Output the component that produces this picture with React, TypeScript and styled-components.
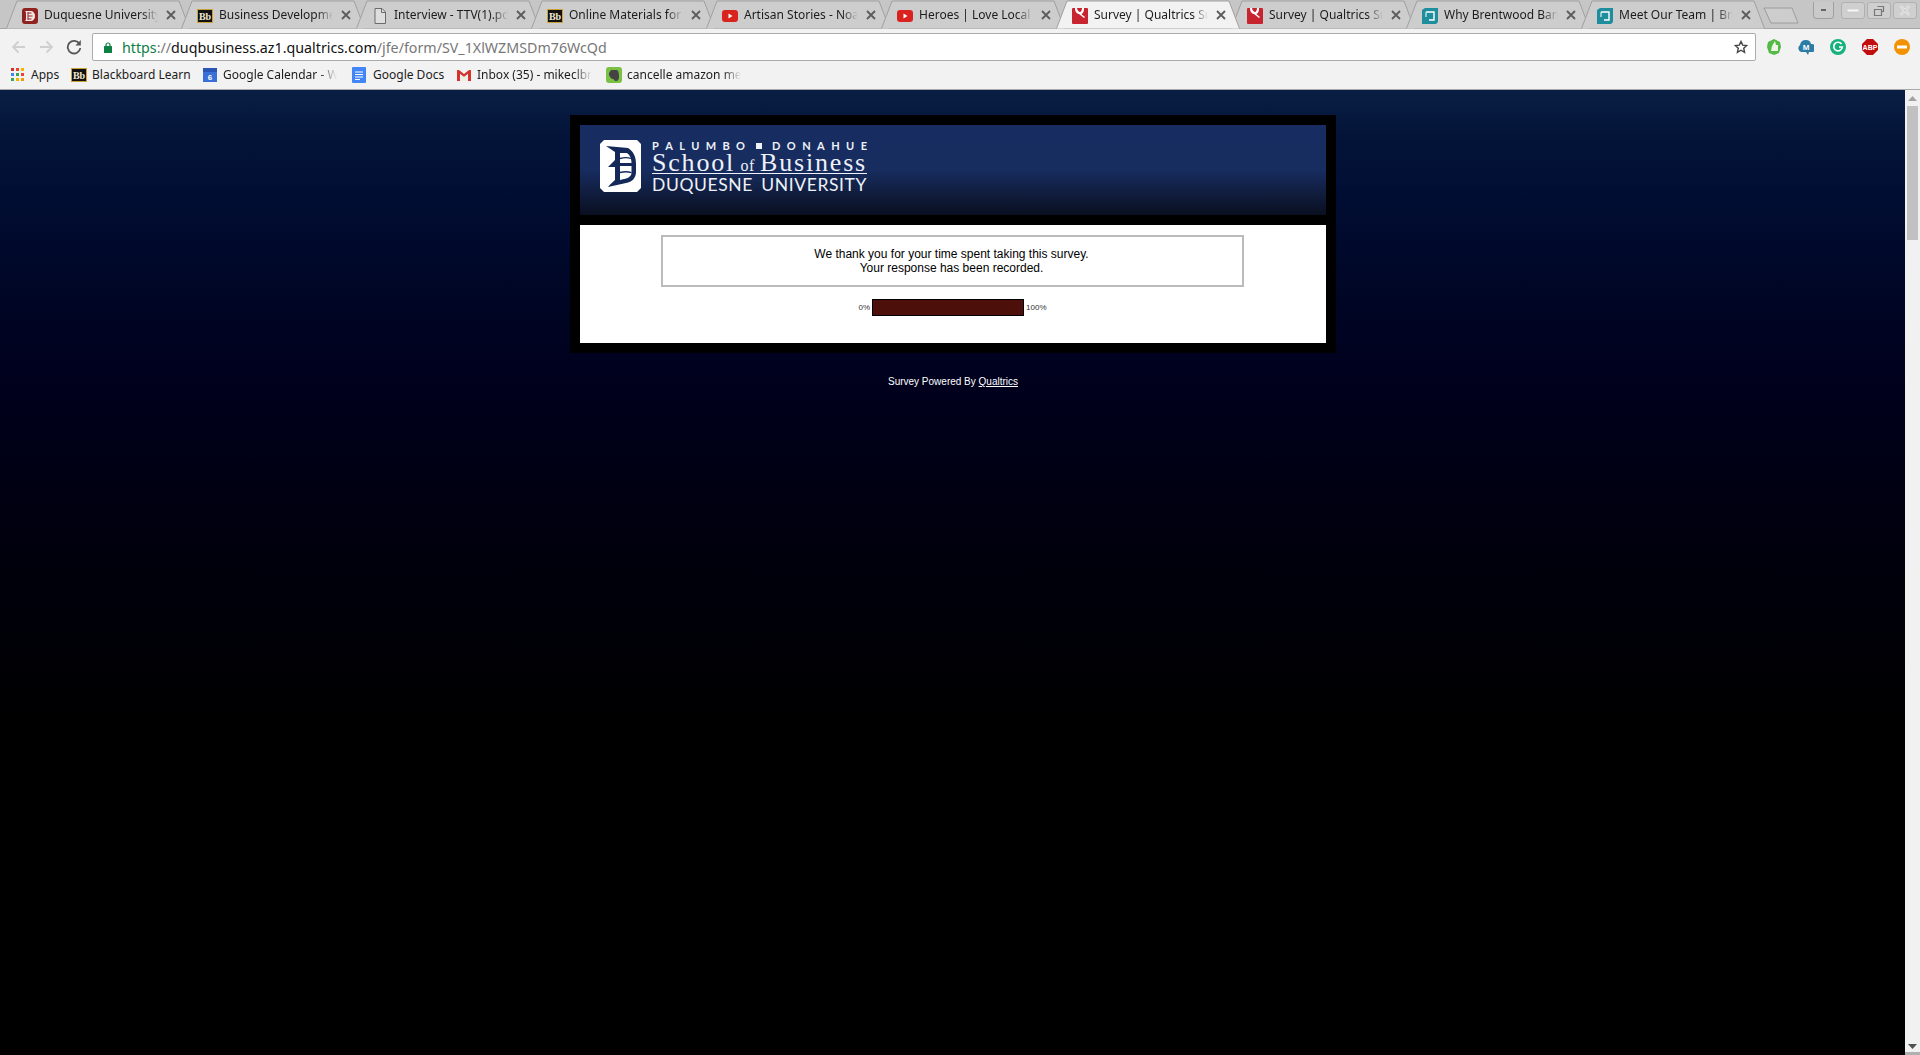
import React from "react";
import styled, { createGlobalStyle } from "styled-components";

const Global = createGlobalStyle`
  html, body { margin: 0; padding: 0; height: 100%; overflow: hidden; background: #000; }
  #root { height: 100%; }
  * { box-sizing: border-box; }
`;

const Root = styled.div`
  display: flex;
  flex-direction: column;
  width: 1920px;
  height: 1055px;
  overflow: hidden;
`;

const UI_FONT = `"Noto Sans", "Open Sans", sans-serif`;

/* ---------- tab strip ---------- */
const TabStrip = styled.div`
  display: flex;
  height: 29px;
  flex: none;
  padding-left: 6px;
  background: #c6c6c6;
  border-bottom: 1px solid #a6a6a6;
  font-family: ${UI_FONT};
`;
const Tab = styled.div<{ $active?: boolean }>`
  position: relative;
  z-index: ${(p) => (p.$active ? 2 : 1)};
  display: flex;
  align-items: center;
  flex: none;
  width: 184px;
  height: 29px;
  margin-right: -9px;
  padding: 1px 0 0 16px;
`;
const TabShape = styled.svg`
  position: absolute;
  left: 0;
  top: 0;
  z-index: 0;
`;
const TabIcon = styled.span`
  position: relative;
  display: block;
  width: 16px;
  height: 16px;
  flex: none;
`;
const TabLabel = styled.span`
  position: relative;
  width: 114px;
  margin-left: 6px;
  overflow: hidden;
  white-space: nowrap;
  font-size: 12px;
  line-height: 18px;
  color: #1c1c1c;
  -webkit-mask-image: linear-gradient(to right, #000 86%, transparent 100%);
  mask-image: linear-gradient(to right, #000 86%, transparent 100%);
`;
const TabClose = styled.svg`
  position: relative;
  flex: none;
  margin-left: 8px;
`;
const NewTab = styled.svg`
  flex: none;
  margin: 7px 0 0 7px;
  position: relative;
  z-index: 0;
`;
const WindowControls = styled.div`
  display: flex;
  margin-left: auto;
  padding: 2px 3px 0 0;
  gap: 2px;
  height: 20px;
  align-items: flex-start;
`;
const MiniButton = styled.div`
  display: flex;
  align-items: center;
  justify-content: center;
  width: 21px;
  height: 17px;
  margin-right: 5px;
  border: 1px solid #a0a0a0;
  border-top: none;
  border-radius: 0 0 4px 4px;
  background: #cacaca;
`;
const WindowButton = styled.div`
  display: flex;
  align-items: center;
  justify-content: center;
  width: 24px;
  height: 17px;
  border: 1px solid #b0b0b0;
  border-radius: 3px;
  background: #cfcfcf;
`;

/* ---------- toolbar ---------- */
const Toolbar = styled.div`
  display: flex;
  align-items: center;
  height: 34px;
  flex: none;
  padding: 2px 0 0 11px;
  background: #f2f2f2;
  font-family: ${UI_FONT};
`;
const NavIcon = styled.svg<{ $gap: number }>`
  flex: none;
  margin-right: ${(p) => p.$gap}px;
`;
const AddressBar = styled.div`
  display: flex;
  align-items: center;
  width: 1664px;
  height: 28px;
  padding: 0 7px 0 11px;
  background: #fff;
  border: 1px solid #ababab;
  border-radius: 2px;
  flex: none;
`;
const LockIcon = styled.svg`
  flex: none;
`;
const UrlText = styled.div`
  margin-left: 10px;
  font-size: 14.25px;
  white-space: nowrap;
  color: #777;
`;
const UrlScheme = styled.span`
  color: #0b8043;
`;
const UrlSep = styled.span`
  color: #777;
`;
const UrlHost = styled.span`
  color: #111;
`;
const Star = styled.svg`
  margin-left: auto;
`;
const Extensions = styled.div`
  display: flex;
  align-items: center;
  margin-left: 10px;
  gap: 16px;
`;

/* ---------- bookmarks ---------- */
const BookmarkBar = styled.div`
  display: flex;
  align-items: center;
  flex: none;
  height: 27px;
  padding: 0 0 3px 11px;
  background: #f2f2f2;
  border-bottom: 1px solid #a8a8a8;
  font-family: ${UI_FONT};
`;
const Bookmark = styled.div<{ $w: number; $gap?: number }>`
  display: flex;
  align-items: center;
  flex: none;
  width: ${(p) => p.$w}px;
  gap: ${(p) => p.$gap ?? 5}px;
`;
const BookmarkLabel = styled.span<{ $max?: number; $fade?: boolean }>`
  font-size: 12px;
  line-height: 16px;
  color: #1c1c1c;
  white-space: nowrap;
  overflow: hidden;
  ${(p) => (p.$max ? `max-width: ${p.$max}px;` : "")}
  ${(p) =>
    p.$fade
      ? `-webkit-mask-image: linear-gradient(to right, #000 84%, transparent 100%);
         mask-image: linear-gradient(to right, #000 84%, transparent 100%);`
      : ""}
`;

/* ---------- page ---------- */
const Viewport = styled.div`
  display: flex;
  flex: 1;
  min-height: 0;
`;
const Page = styled.main`
  display: flex;
  flex-direction: column;
  align-items: center;
  flex: 1;
  padding: 25px 0 0 1px;
  background: linear-gradient(
    to bottom,
    #0a1e44 0,
    #041539 40px,
    #000d32 110px,
    #000626 200px,
    #00001c 300px,
    #00000e 450px,
    #000 640px
  );
`;
const Card = styled.section`
  display: flex;
  flex-direction: column;
  gap: 10px;
  width: 766px;
  padding: 10px;
  background: #000;
`;
const Banner = styled.header`
  display: flex;
  align-items: flex-start;
  gap: 11px;
  height: 90px;
  padding: 15px 0 0 20px;
  background: linear-gradient(to bottom, #172d61 0, #172c5f 50%, #0a0f20 100%);
`;
const Badge = styled.svg`
  flex: none;
`;
const Wordmark = styled.div`
  display: flex;
  flex-direction: column;
  width: 215px;
  color: #eef1f7;
`;
const WordmarkTop = styled.div`
  display: flex;
  align-items: center;
  justify-content: space-between;
  height: 12px;
  font-family: Lato, "Open Sans", sans-serif;
  font-size: 11px;
  font-weight: 700;
  line-height: 12px;
`;
const SpacedWord = styled.span<{ $w: number }>`
  display: flex;
  justify-content: space-between;
  width: ${(p) => p.$w}px;
`;
const Square = styled.span`
  display: block;
  width: 6px;
  height: 6px;
  background: #eef1f7;
`;
const WordmarkMid = styled.div`
  display: flex;
  justify-content: space-between;
  align-items: baseline;
  height: 21px;
  margin-top: 1px;
  padding-bottom: 1px;
  font-family: "Liberation Serif", serif;
  font-size: 26px;
  letter-spacing: 1.8px;
  line-height: 20px;
  font-weight: 400;
  white-space: nowrap;
  border-bottom: 1px solid #eef1f7;
`;
const WordmarkOf = styled.span`
  font-size: 16px;
  letter-spacing: 0.5px;
`;
const WordmarkBottom = styled.div`
  display: flex;
  justify-content: space-between;
  margin-top: 2px;
  font-family: Lato, "Open Sans", sans-serif;
  font-size: 17.5px;
  letter-spacing: 0.6px;
  line-height: 18px;
  white-space: nowrap;
`;
const Body = styled.div`
  display: flex;
  flex-direction: column;
  height: 118px;
  padding: 10px 0 0 81px;
  background: #fff;
  font-family: "Liberation Sans", Arial, sans-serif;
`;
const Notice = styled.div`
  display: flex;
  flex-direction: column;
  justify-content: center;
  width: 583px;
  height: 52px;
  padding-right: 2px;
  border: 2px solid #bbb;
  text-align: center;
  font-size: 12px;
  line-height: 14px;
  color: #000;
`;
const ProgressRow = styled.div`
  display: flex;
  align-items: center;
  justify-content: center;
  gap: 2px;
  width: 583px;
  margin-top: 12px;
  font-size: 8px;
  color: #333;
`;
const ProgressBar = styled.div`
  width: 152px;
  height: 17px;
  background: #4d0f0a;
  border: 1px solid #000;
`;
const Footer = styled.footer`
  margin-top: 23px;
  font-family: "Liberation Sans", Arial, sans-serif;
  font-size: 10px;
  line-height: 12px;
  color: #fff;
`;
const FooterLink = styled.a`
  color: #fff;
  text-decoration: underline;
`;

/* ---------- scrollbar ---------- */
const ScrollTrack = styled.div`
  display: flex;
  flex-direction: column;
  align-items: center;
  flex: none;
  width: 15px;
  padding-top: 6px;
  background: #f1f1f1;
  border-bottom: 3px solid #b0b0b0;
`;
const ScrollThumb = styled.div`
  width: 11px;
  height: 134px;
  margin-top: 5px;
  background: #c1c1c1;
`;
const ScrollArrowDown = styled.svg`
  margin-top: auto;
  margin-bottom: 3px;
`;

/* ---------- icons ---------- */
const BbIcon = ({ s = 16 }: { s?: number }) => (
  <svg width={s} height={s} viewBox="0 0 16 16">
    <rect x="0.5" y="1.5" width="15" height="13" fill="#111" stroke="#c9a23a" />
    <text x="8" y="11.5" textAnchor="middle" fontFamily="Liberation Serif, serif" fontWeight="700" fontSize="10" fill="#f0e8d0">
      Bb
    </text>
  </svg>
);
const DuIcon = () => (
  <svg width="16" height="16" viewBox="0 0 16 16">
    <rect x="0" y="0" width="16" height="16" rx="3" fill="#8e2420" />
    <path d="M3 3h7c2 1 3 3 3 5s-1 4-3 5H3l1-1.500V4.500z" fill="#f4e6e4" />
    <path d="M6 5h3.500M6 8h4.500M6 11h3.500M6 4v8" stroke="#8e2420" strokeWidth="1" fill="none" />
  </svg>
);
const DocIcon = () => (
  <svg width="16" height="16" viewBox="0 0 16 16">
    <path d="M3 .5h7l3.500 3.500v11.500H3z" fill="#dedede" stroke="#6a6a6a" />
    <path d="M9.500 .5v4h4" fill="none" stroke="#6a6a6a" />
  </svg>
);
const YtIcon = () => (
  <svg width="16" height="16" viewBox="0 0 16 16">
    <rect x="0" y="2" width="16" height="12" rx="3" fill="#d9231f" />
    <path d="M6.500 5.500L10.500 8l-4 2.500z" fill="#fff" />
  </svg>
);
const QIcon = () => (
  <svg width="16" height="16" viewBox="0 0 16 16">
    <path d="M1 0h14a1 1 0 0 1 1 1v14a1 1 0 0 1-1 1H1a1 1 0 0 1-1-1V1a1 1 0 0 1 1-1z" fill="#c8242f" />
    <path d="M3 0c0 4 2 6 5 6s4-2 4-6h-2c0 2-1 4-2 4S5 2 5 0z" fill="#fff" />
    <path d="M8 5l5 4-1 1-5-4z" fill="#fff" />
  </svg>
);
const BrentIcon = () => (
  <svg width="16" height="16" viewBox="0 0 16 16">
    <path d="M0 2l3-2h13v14l-2 2H0z" fill="#1e8d9c" />
    <path d="M4 4h8v8H7" fill="none" stroke="#fff" strokeWidth="1.400" />
    <path d="M4 4v5" fill="none" stroke="#bfe3e8" strokeWidth="1.400" />
  </svg>
);

type IconKind = "du" | "bb" | "doc" | "yt" | "q" | "brent";
const tabIcons: Record<IconKind, React.ReactNode> = {
  du: <DuIcon />,
  bb: <BbIcon />,
  doc: <DocIcon />,
  yt: <YtIcon />,
  q: <QIcon />,
  brent: <BrentIcon />,
};

const tabs: { title: string; icon: IconKind; active?: boolean }[] = [
  { title: "Duquesne University", icon: "du" },
  { title: "Business Development", icon: "bb" },
  { title: "Interview - TTV(1).pdf", icon: "doc" },
  { title: "Online Materials for", icon: "bb" },
  { title: "Artisan Stories - Noah", icon: "yt" },
  { title: "Heroes | Love Local", icon: "yt" },
  { title: "Survey | Qualtrics Survey", icon: "q", active: true },
  { title: "Survey | Qualtrics Survey", icon: "q" },
  { title: "Why Brentwood Bank", icon: "brent" },
  { title: "Meet Our Team | Brent", icon: "brent" },
];

const TabBackground = ({ active }: { active?: boolean }) => (
  <TabShape width="184" height="29" viewBox="0 0 184 29">
    <path
      d="M0.500 28.500L11 1H173L183.500 28.500"
      fill={active ? "#f2f2f2" : "#cdcdcd"}
      stroke="#a0a0a0"
      strokeWidth="1"
    />
  </TabShape>
);

const CloseGlyph = () => (
  <TabClose width="10" height="10" viewBox="0 0 10 10">
    <path d="M1 1l8 8M9 1L1 9" stroke="#5c5c5c" strokeWidth="1.800" />
  </TabClose>
);

const Ext = ({ children }: { children: React.ReactNode }) => (
  <svg width="16" height="18" viewBox="0 0 16 18">
    {children}
  </svg>
);

const DBadge = () => (
  <Badge width="41" height="52" viewBox="0 0 41 52">
    <path d="M4 0h33l4 4v44l-4 4H4l-4-4V4z" fill="#fff" />
    <path
      d="M6 6L28 8C33 11 36 16 36 24V32C36 38 32 42 26 43L8 47C10 44 13 42 15 40V27L8 27L15 20V12Z"
      fill="#14295a"
    />
    <path d="M20 13H27C30 15 31.500 19 31.500 23H20Z" fill="#fff" />
    <path d="M20 26H31.500V33C31.500 36 28 38.500 24 39L20 40Z" fill="#fff" />
    <path d="M20 18.500C24 17.500 28 17.500 31 18.500M20 32.500C24 31.500 28 31.500 31.500 32.500" fill="none" stroke="#14295a" strokeWidth="1.300" />
  </Badge>
);

export default function App() {
  return (
    <Root>
      <Global />
      <TabStrip>
        {tabs.map((t) => (
          <Tab key={t.title + t.active} $active={t.active}>
            <TabBackground active={t.active} />
            <TabIcon>{tabIcons[t.icon]}</TabIcon>
            <TabLabel>{t.title}</TabLabel>
            <CloseGlyph />
          </Tab>
        ))}
        <NewTab width="36" height="17" viewBox="0 0 36 17">
          <path d="M1 1h28l6 15H8z" fill="#cdcdcd" stroke="#9c9c9c" strokeLinejoin="round" />
        </NewTab>
        <WindowControls>
          <MiniButton>
            <svg width="6" height="3" viewBox="0 0 6 3">
              <rect width="5" height="2" fill="#666" />
            </svg>
          </MiniButton>
          <WindowButton>
            <svg width="12" height="4" viewBox="0 0 12 4">
              <rect width="12" height="3" rx="1" fill="#f4f4f4" stroke="#bbb" strokeWidth="0.500" />
            </svg>
          </WindowButton>
          <WindowButton>
            <svg width="12" height="12" viewBox="0 0 12 12">
              <path d="M4.500 1.500h6v5h-2M1.500 4.500h7v6h-7z" fill="none" stroke="#777" strokeWidth="1.200" />
            </svg>
          </WindowButton>
          <WindowButton>
            <svg width="12" height="11" viewBox="0 0 12 11">
              <path d="M1.500 1l9 9M10.500 1l-9 9" stroke="#f4f4f4" strokeWidth="2.200" />
              <path d="M1.500 1l9 9M10.500 1l-9 9" stroke="#999" strokeWidth="0.600" />
            </svg>
          </WindowButton>
        </WindowControls>
      </TabStrip>

      <Toolbar>
        <NavIcon $gap={13} width="15" height="14" viewBox="0 0 15 14">
          <path d="M14 7H2M7.500 1.500L2 7l5.500 5.500" fill="none" stroke="#cfcfcf" strokeWidth="1.800" />
        </NavIcon>
        <NavIcon $gap={12} width="15" height="14" viewBox="0 0 15 14">
          <path d="M1 7h12M7.500 1.500L13 7l-5.500 5.500" fill="none" stroke="#cfcfcf" strokeWidth="1.800" />
        </NavIcon>
        <NavIcon $gap={10} width="16" height="16" viewBox="0 0 16 16">
          <path d="M13.500 5A6.300 6.300 0 1 0 14.300 9" fill="none" stroke="#555" strokeWidth="1.800" />
          <path d="M14.800 1v5.400H9.400z" fill="#555" />
        </NavIcon>
        <AddressBar>
          <LockIcon width="8" height="11" viewBox="0 0 8 11">
            <path d="M2 4.500V3a2 2 0 0 1 4 0v1.500" fill="none" stroke="#0b8043" strokeWidth="1.200" />
            <rect y="4" width="8" height="7" rx="0.500" fill="#0b8043" />
          </LockIcon>
          <UrlText>
            <UrlScheme>https</UrlScheme>
            <UrlSep>://</UrlSep>
            <UrlHost>duqbusiness.az1.qualtrics.com</UrlHost>
            /jfe/form/SV_1XlWZMSDm76WcQd
          </UrlText>
          <Star width="14" height="14" viewBox="0 0 24 24">
            <path
              d="M12 2.500l2.900 6.300 6.900.8-5.100 4.700 1.400 6.800L12 17.600l-6.100 3.500 1.400-6.800L2.200 9.600l6.900-.8z"
              fill="none"
              stroke="#444"
              strokeWidth="2.400"
            />
          </Star>
        </AddressBar>
        <Extensions>
          <Ext>
            <path d="M8 1l6 3 1 5-2 6-5 2-5-2-2-6 1-5z" fill="#55b948" />
            <path d="M6 8l3-5 1 4h2v6H5z" fill="#eef6e6" />
          </Ext>
          <Ext>
            <path d="M8 2a5 5 0 0 1 5 4 4 4 0 0 1 1 8h-3l-1 3-2-3H3a4 4 0 0 1-1-7 6 6 0 0 1 6-5z" fill="#2c7da6" />
            <text x="8" y="12" textAnchor="middle" fontFamily="Liberation Sans, sans-serif" fontWeight="700" fontSize="8" fill="#fff">
              M
            </text>
          </Ext>
          <Ext>
            <circle cx="8" cy="9" r="8" fill="#15b27c" />
            <path d="M11.500 6A4.300 4.300 0 1 0 12.300 9H9" fill="none" stroke="#fff" strokeWidth="1.700" />
          </Ext>
          <Ext>
            <path d="M5 1h6l5 5v6l-5 5H5l-5-5V6z" fill="#c10d0d" />
            <text x="8" y="12" textAnchor="middle" fontFamily="Liberation Sans, sans-serif" fontWeight="700" fontSize="7" fill="#fff">
              ABP
            </text>
          </Ext>
          <Ext>
            <circle cx="8" cy="9" r="8" fill="#f39200" />
            <rect x="3" y="7.500" width="10" height="3" fill="#fff" />
          </Ext>
        </Extensions>
      </Toolbar>

      <BookmarkBar>
        <Bookmark $w={60} $gap={7}>
          <svg width="13" height="13" viewBox="0 0 13 13">
            {[
              ["#d93025", "#ea4335", "#f4b400"],
              ["#4285f4", "#34a853", "#ea4335"],
              ["#34a853", "#f4b400", "#f29900"],
            ].map((row, y) =>
              row.map((c, x) => <rect key={`${x}-${y}`} x={x * 5} y={y * 5} width="3" height="3" fill={c} />)
            )}
          </svg>
          <BookmarkLabel>Apps</BookmarkLabel>
        </Bookmark>
        <Bookmark $w={131}>
          <BbIcon />
          <BookmarkLabel>Blackboard Learn</BookmarkLabel>
        </Bookmark>
        <Bookmark $w={149}>
          <svg width="16" height="16" viewBox="0 0 16 16">
            <path d="M1 1h14v14H1z" fill="#3a6fd8" />
            <rect x="1" y="1" width="14" height="4" fill="#2a55b5" />
            <text x="8" y="13" textAnchor="middle" fontFamily="Liberation Sans, sans-serif" fontWeight="700" fontSize="8" fill="#fff">
              6
            </text>
          </svg>
          <BookmarkLabel $max={114} $fade>
            Google Calendar - Week
          </BookmarkLabel>
        </Bookmark>
        <Bookmark $w={106} $gap={6}>
          <svg width="16" height="16" viewBox="0 0 16 16">
            <rect x="1" width="14" height="16" rx="1" fill="#4285f4" />
            <path d="M4 5h8M4 7.500h8M4 10h8M4 12.500h5" stroke="#fff" strokeWidth="1" />
          </svg>
          <BookmarkLabel>Google Docs</BookmarkLabel>
        </Bookmark>
        <Bookmark $w={149} $gap={6}>
          <svg width="14" height="12" viewBox="0 0 14 12">
            <path d="M0 1h2l5 4 5-4h2v11h-3V5L7 8 3 5v7H0z" fill="#d0342c" />
            <path d="M3 5l4 3 4-3v7H3z" fill="#f0ece8" />
          </svg>
          <BookmarkLabel $max={115} $fade>
            Inbox (35) - mikeclbrs
          </BookmarkLabel>
        </Bookmark>
        <Bookmark $w={140}>
          <svg width="16" height="16" viewBox="0 0 16 16">
            <rect width="16" height="16" rx="3" fill="#7ac043" />
            <path d="M5 3h6c2 1 2 5 2 7s-1 4-3 4c-2 0-2-2-3-2-2 0-3-2-4-4V6z" fill="#444" />
          </svg>
          <BookmarkLabel $max={114} $fade>
            cancelle amazon membership
          </BookmarkLabel>
        </Bookmark>
      </BookmarkBar>

      <Viewport>
        <Page>
          <Card>
            <Banner>
              <DBadge />
              <Wordmark>
                <WordmarkTop>
                  <SpacedWord $w={93}>
                    {"PALUMBO".split("").map((c, i) => (
                      <span key={i}>{c}</span>
                    ))}
                  </SpacedWord>
                  <Square />
                  <SpacedWord $w={95}>
                    {"DONAHUE".split("").map((c, i) => (
                      <span key={i}>{c}</span>
                    ))}
                  </SpacedWord>
                </WordmarkTop>
                <WordmarkMid>
                  <span>School</span>
                  <WordmarkOf>of</WordmarkOf>
                  <span>Business</span>
                </WordmarkMid>
                <WordmarkBottom>
                  <span>DUQUESNE</span>
                  <span>UNIVERSITY</span>
                </WordmarkBottom>
              </Wordmark>
            </Banner>
            <Body>
              <Notice>
                <div>We thank you for your time spent taking this survey.</div>
                <div>Your response has been recorded.</div>
              </Notice>
              <ProgressRow>
                <span>0%</span>
                <ProgressBar />
                <span>100%</span>
              </ProgressRow>
            </Body>
          </Card>
          <Footer>
            Survey Powered By <FooterLink href="#">Qualtrics</FooterLink>
          </Footer>
        </Page>
        <ScrollTrack>
          <svg width="9" height="5" viewBox="0 0 9 5">
            <path d="M4.500 0L9 5H0z" fill="#a3a3a3" />
          </svg>
          <ScrollThumb />
          <ScrollArrowDown width="9" height="5" viewBox="0 0 9 5">
            <path d="M0 0h9L4.500 5z" fill="#505050" />
          </ScrollArrowDown>
        </ScrollTrack>
      </Viewport>
    </Root>
  );
}
